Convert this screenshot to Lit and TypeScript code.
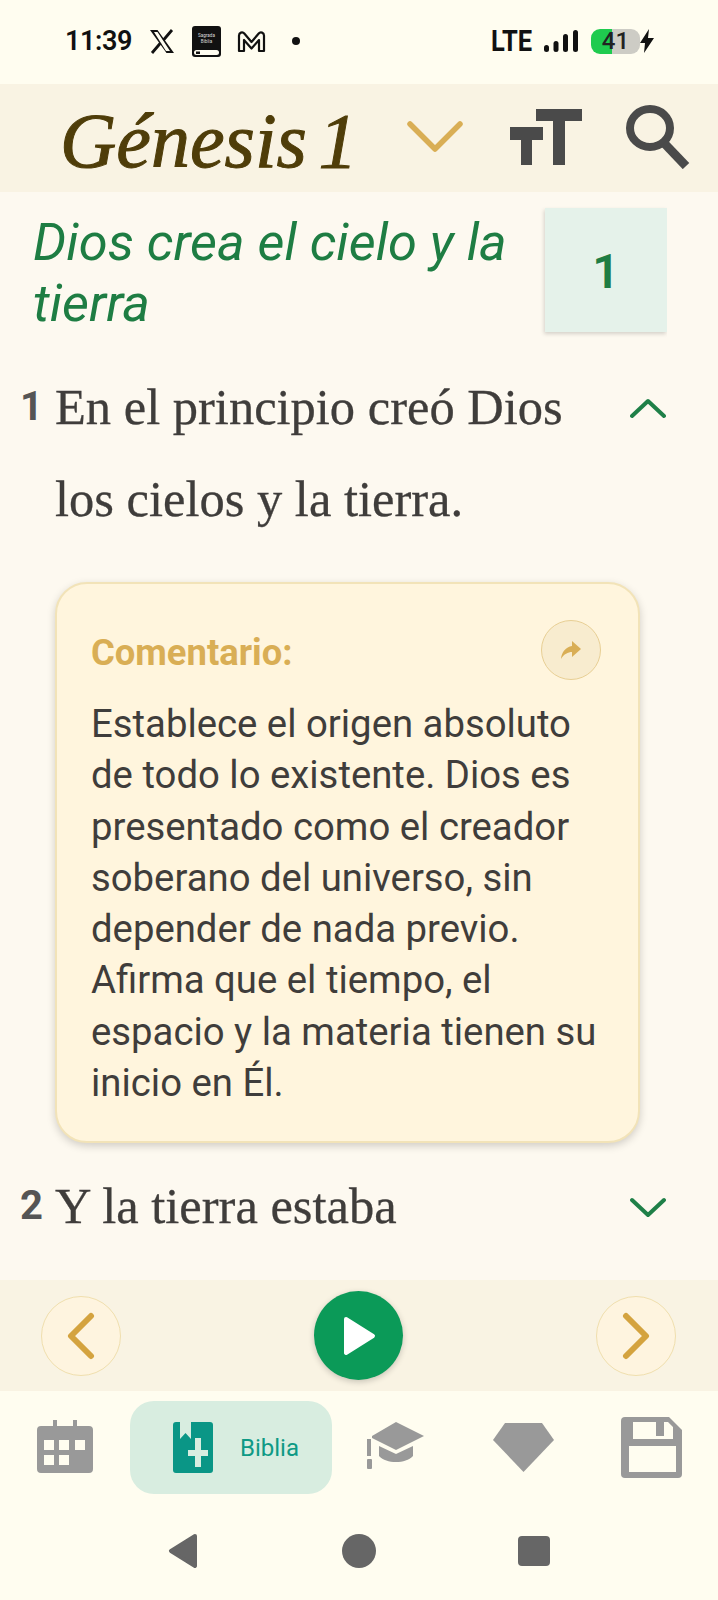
import { LitElement, html, css, svg } from "lit";
import { customElement } from "lit/decorators.js";

@customElement("app-root")
export class AppRoot extends LitElement {
  static styles = css`
    :host { display: flex; flex-direction: column; width: 718px; height: 1600px; overflow: hidden; background: #fdf9f0; font-family: Roboto, sans-serif; color: #3f3d3b; }
    svg { display: block; flex: none; }
    .status { height: 84px; flex: none; background: #fffdf0; display: flex; align-items: center; padding: 0 0 2px 65px; box-sizing: border-box; color: #111; }
    .time { font: 600 27px/1 Roboto, sans-serif; width: 84px; letter-spacing: -.4px; }
    .s-x { margin-right: 16px; }
    .s-book { margin-right: 15px; }
    .s-m { margin-right: 26px; }
    .dot { width: 8px; height: 8px; border-radius: 50%; background: #111; margin-right: 191px; }
    .lte { font: 700 30px/1 Roboto, sans-serif; width: 53px; transform: scaleX(.85); transform-origin: left center; }
    .s-bars { margin-right: 13px; }
    .batt { width: 49px; height: 25px; border-radius: 9px; background: linear-gradient(90deg, #1fcb4f 0 21px, #cdccc5 21px); display: flex; align-items: center; justify-content: center; font: 500 24px/1 Roboto, sans-serif; color: #222; }
    .header { height: 108px; flex: none; background: #f9f3e3; display: flex; align-items: center; padding-left: 60px; box-sizing: border-box; }
    .title { font: italic 400 78px/1 "Liberation Serif", serif; word-spacing: -8px; color: #4f3d09; width: 347px; white-space: nowrap; -webkit-text-stroke: 1px #4f3d09; padding-top: 6px; }
    .h-ch { margin-right: 47px; margin-top: -2px; }
    .h-tt { margin-right: 44px; margin-top: -2px; }
    .h-s { margin-top: -2px; }
    .main { flex: 1; min-height: 0; display: flex; flex-direction: column; }
    .sec { display: flex; align-items: flex-start; padding: 16px 51px 0 33px; }
    .sec-t { flex: 1; font: italic 400 52.400px/61px Roboto, sans-serif; color: #1e7d43; padding-top: 4px; }
    .chap { width: 122px; height: 124px; background: #e5f2ea; box-shadow: -1px 2px 4px rgba(0,0,0,.16); clip-path: inset(-6px 0 -6px -6px); display: flex; align-items: center; justify-content: center; font: 600 48px/1 Roboto, sans-serif; color: #1e7d43; padding-top: 3px; box-sizing: border-box; }
    .verse { display: grid; grid-template-columns: 55px 1fr 46px; padding-right: 52px; }
    .v1 { margin-top: 27px; }
    .vn { font: 700 40px/92px Roboto, sans-serif; color: #555; text-align: right; padding-right: 12px; }
    .vt { font: 400 50.500px/92px "Liberation Serif", serif; color: #3f3d3b; -webkit-text-stroke: .3px #3f3d3b; }
    .vc { padding-top: 37px; justify-self: end; }
    .card { margin: 37px 0 0 55px; width: 585px; height: 561px; box-sizing: border-box; background: #fff5dd; border: 2px solid #f2e3b8; border-radius: 32px; box-shadow: 0 3px 9px rgba(0,0,0,.18); padding: 36px 37px 0 34px; }
    .card-h { display: flex; justify-content: space-between; align-items: center; height: 60px; margin-bottom: 18px; }
    .card-l { font: 700 36.400px/1 Roboto, sans-serif; color: #d9ae55; margin-top: 6px; }
    .share { width: 60px; height: 60px; box-sizing: border-box; border-radius: 50%; background: #f8eccf; border: 1.500px solid #e8cf94; display: flex; align-items: center; justify-content: center; }
    .card-b { font: 400 38.300px/51.300px Roboto, sans-serif; color: #3f3d3b; margin: 0; }
    .v2 { margin-top: 17px; }
    .player { height: 111px; flex: none; background: #f9f3e3; display: flex; align-items: center; justify-content: space-between; padding: 0 42px 0 41px; box-sizing: border-box; }
    .rnd { width: 80px; height: 80px; box-sizing: border-box; border-radius: 50%; background: #fef4df; border: 1.500px solid #f0dfae; display: flex; align-items: center; justify-content: center; }
    .play { width: 89px; height: 89px; border-radius: 50%; background: #0b9a58; box-shadow: 0 2px 6px rgba(0,0,0,.2); display: flex; align-items: center; justify-content: center; }
    .tabs { height: 126px; flex: none; background: #fffdf0; display: flex; align-items: flex-start; padding: 10px 0 0 37px; box-sizing: border-box; }
    .tab-cal { margin: 19px 37px 0 0; }
    .pill { width: 202px; height: 93px; border-radius: 24px; background: #d8ede0; display: flex; align-items: center; padding-left: 43px; box-sizing: border-box; margin-right: 35px; }
    .pill span { font: 400 24px/1 Roboto, sans-serif; color: #0e9a85; margin-left: 27px; }
    .tab-cap { margin: 21px 69px 0 0; }
    .tab-dia { margin: 22px 67px 0 0; }
    .tab-sav { margin: 16px 0 0 0; }
    .sys { height: 83px; flex: none; background: #fffdf0; display: flex; align-items: flex-start; padding: 17px 0 0 168px; box-sizing: border-box; }
    .sys-a { margin-right: 143px; }
    .sys-b { margin-right: 142px; }
    .sys-c { margin-top: 2px; }
  `;

  render() {
    return html`
      <div class="status">
        <span class="time">11:39</span>
        <svg class="s-x" width="26" height="25" viewBox="0 0 26 25">
          <path d="M1 1h7.500l16.500 23h-7.500zM5 3l12 19h4L8.500 3z" fill="#111" fill-rule="evenodd"/>
          <path d="M23 1 14.500 11M11.500 14 3 24" stroke="#111" stroke-width="2.800" fill="none"/>
        </svg>
        <svg class="s-book" width="31" height="31" viewBox="0 0 31 31">
          <path d="M4 0h23a3 3 0 0 1 3 3v25a3 3 0 0 1-3 3H4a3 3 0 0 1-3-3V3a3 3 0 0 1 3-3z" fill="#111"/>
          <rect x="3" y="24" width="25" height="5" rx="2.500" fill="#fffdf0"/>
          <rect x="5" y="25.500" width="4" height="2.500" fill="#111"/>
          <text x="15.500" y="11" font-size="4.600" fill="#ddd" text-anchor="middle" font-family="Roboto">Sagrada</text>
          <text x="15.500" y="17" font-size="4.600" fill="#ddd" text-anchor="middle" font-family="Roboto">Biblia</text>
        </svg>
        <svg class="s-m" width="29" height="23" viewBox="0 0 29 23">
          <path d="M2 21V5.500a3 3 0 0 1 5.300-2L14.500 12l7.200-8.500a3 3 0 0 1 5.300 2V21h-5V10l-7.500 8.500L7 10v11z" fill="none" stroke="#111" stroke-width="2.200" stroke-linejoin="round"/>
        </svg>
        <span class="dot"></span>
        <span class="lte">LTE</span>
        <svg class="s-bars" width="34" height="23" viewBox="0 0 34 23" fill="#111">
          <rect x="0" y="15" width="5" height="7" rx="2.500"/><rect x="9.500" y="11" width="5" height="11" rx="2.500"/><rect x="19" y="4" width="5" height="18" rx="2.500"/><rect x="29" y="0" width="5" height="22" rx="2.500"/>
        </svg>
        <span class="batt">41</span>
        <svg width="14" height="24" viewBox="0 0 14 24"><path d="M9 0 0 14h5l-1 10 10-15H8z" fill="#111"/></svg>
      </div>

      <div class="header">
        <span class="title">Génesis 1</span>
        <svg class="h-ch" width="56" height="32" viewBox="0 0 56 32"><path d="M3 3l25 25L53 3" fill="none" stroke="#d9ae55" stroke-width="5.500" stroke-linecap="round" stroke-linejoin="round"/></svg>
        <svg class="h-tt" width="72" height="56" viewBox="0 0 72 56" fill="#4a4a4a">
          <path d="M26 0h46v12H55v44H43V12H26z"/><path d="M0 18h33v13H22v25H11V31H0z"/>
        </svg>
        <svg class="h-s" width="64" height="64" viewBox="0 0 64 64"><ellipse cx="24" cy="23" rx="20" ry="19" fill="none" stroke="#4a4a4a" stroke-width="8"/><path d="M38 38l22 23" stroke="#4a4a4a" stroke-width="9" fill="none"/></svg>
      </div>

      <div class="main">
        <div class="sec">
          <div class="sec-t">Dios crea el cielo y la tierra</div>
          <div class="chap">1</div>
        </div>
        <div class="verse v1">
          <div class="vn">1</div>
          <div class="vt">En el principio creó Dios los cielos y la tierra.</div>
          <div class="vc">${chevron("M2 18 18 3l16 15", "#1f8048")}</div>
        </div>
        <div class="card">
          <div class="card-h">
            <span class="card-l">Comentario:</span>
            <span class="share"><svg width="22" height="22" viewBox="0 0 22 22"><path d="M12 2l9 8-9 8v-5C8 13 4 15 1 20c.5-7 5-12 11-13z" fill="#d9ae55"/></svg></span>
          </div>
          <p class="card-b">Establece el origen absoluto de todo lo existente. Dios es presentado como el creador soberano del universo, sin depender de nada previo. Afirma que el tiempo, el espacio y la materia tienen su inicio en Él.</p>
        </div>
        <div class="verse v2">
          <div class="vn">2</div>
          <div class="vt">Y la tierra estaba</div>
          <div class="vc">${chevron("M2 3l16 15L34 3", "#1f8048")}</div>
        </div>
      </div>

      <div class="player">
        <span class="rnd"><svg width="30" height="48" viewBox="0 0 30 48"><path d="M25 4 5 24l20 20" fill="none" stroke="#d4a33f" stroke-width="6" stroke-linecap="round" stroke-linejoin="round"/></svg></span>
        <span class="play"><svg width="34" height="40" viewBox="0 0 34 40"><path d="M4 3l27 17L4 37z" fill="#fff" stroke="#fff" stroke-width="4" stroke-linejoin="round"/></svg></span>
        <span class="rnd"><svg width="30" height="48" viewBox="0 0 30 48"><path d="M5 4l20 20L5 44" fill="none" stroke="#d4a33f" stroke-width="6" stroke-linecap="round" stroke-linejoin="round"/></svg></span>
      </div>

      <div class="tabs">
        <svg class="tab-cal" width="56" height="53" viewBox="0 0 56 53">
          <path d="M16 0h4v6h16V0h4v6h12a4 4 0 0 1 4 4v39a4 4 0 0 1-4 4H4a4 4 0 0 1-4-4V10a4 4 0 0 1 4-4h12z" fill="#999"/>
          <g fill="#fffdf0"><rect x="7" y="20" width="10" height="10"/><rect x="22" y="20" width="10" height="10"/><rect x="38" y="20" width="10" height="10"/><rect x="7" y="35" width="10" height="10"/><rect x="22" y="35" width="10" height="10"/></g>
        </svg>
        <div class="pill">
          <svg width="40" height="51" viewBox="0 0 40 51">
            <path d="M3 0h4v17l5.500-6 5.500 6V0h19a3 3 0 0 1 3 3v45a3 3 0 0 1-3 3H3a3 3 0 0 1-3-3V3a3 3 0 0 1 3-3z" fill="#0a9686"/>
            <path d="M22 16h6v12h7v6h-7v11h-6V34h-7v-6h7z" fill="#d8ede0"/>
          </svg>
          <span>Biblia</span>
        </div>
        <svg class="tab-cap" width="57" height="47" viewBox="0 0 57 47" fill="#999">
          <path d="M29 0l28 14-8 4-20 10L5 16V14z"/><path d="M12 24l17 8 17-8v10c-4 4-10 6-17 6s-13-2-17-6z"/><rect x="0" y="17" width="4" height="17"/><rect x="0" y="37" width="5" height="10" rx="1"/>
        </svg>
        <svg class="tab-dia" width="61" height="49" viewBox="0 0 61 49"><path d="M12 0h37l12 17-30.500 32L0 17z" fill="#999"/></svg>
        <svg class="tab-sav" width="61" height="61" viewBox="0 0 61 61">
          <path d="M4 0h44l13 13v44a4 4 0 0 1-4 4H4a4 4 0 0 1-4-4V4a4 4 0 0 1 4-4z" fill="#999"/>
          <path d="M12 5h35l5 5v12H12zM8 29h47v26H8z" fill="#fffdf0"/>
          <rect x="35" y="5" width="8" height="14" fill="#999"/>
        </svg>
      </div>

      <div class="sys">
        <svg class="sys-a" width="31" height="34" viewBox="0 0 31 34"><path d="M27 2 3 17l24 15z" fill="#666" stroke="#666" stroke-width="4" stroke-linejoin="round"/></svg>
        <svg class="sys-b" width="34" height="34" viewBox="0 0 34 34"><circle cx="17" cy="17" r="17" fill="#666"/></svg>
        <svg class="sys-c" width="32" height="30" viewBox="0 0 32 30"><rect width="32" height="30" rx="4" fill="#666"/></svg>
      </div>
    `;
  }
}

function chevron(d: string, color: string) {
  return html`<svg width="36" height="21" viewBox="0 0 36 21">${svg`<path d=${d} fill="none" stroke=${color} stroke-width="4" stroke-linecap="round" stroke-linejoin="round"/>`}</svg>`;
}
